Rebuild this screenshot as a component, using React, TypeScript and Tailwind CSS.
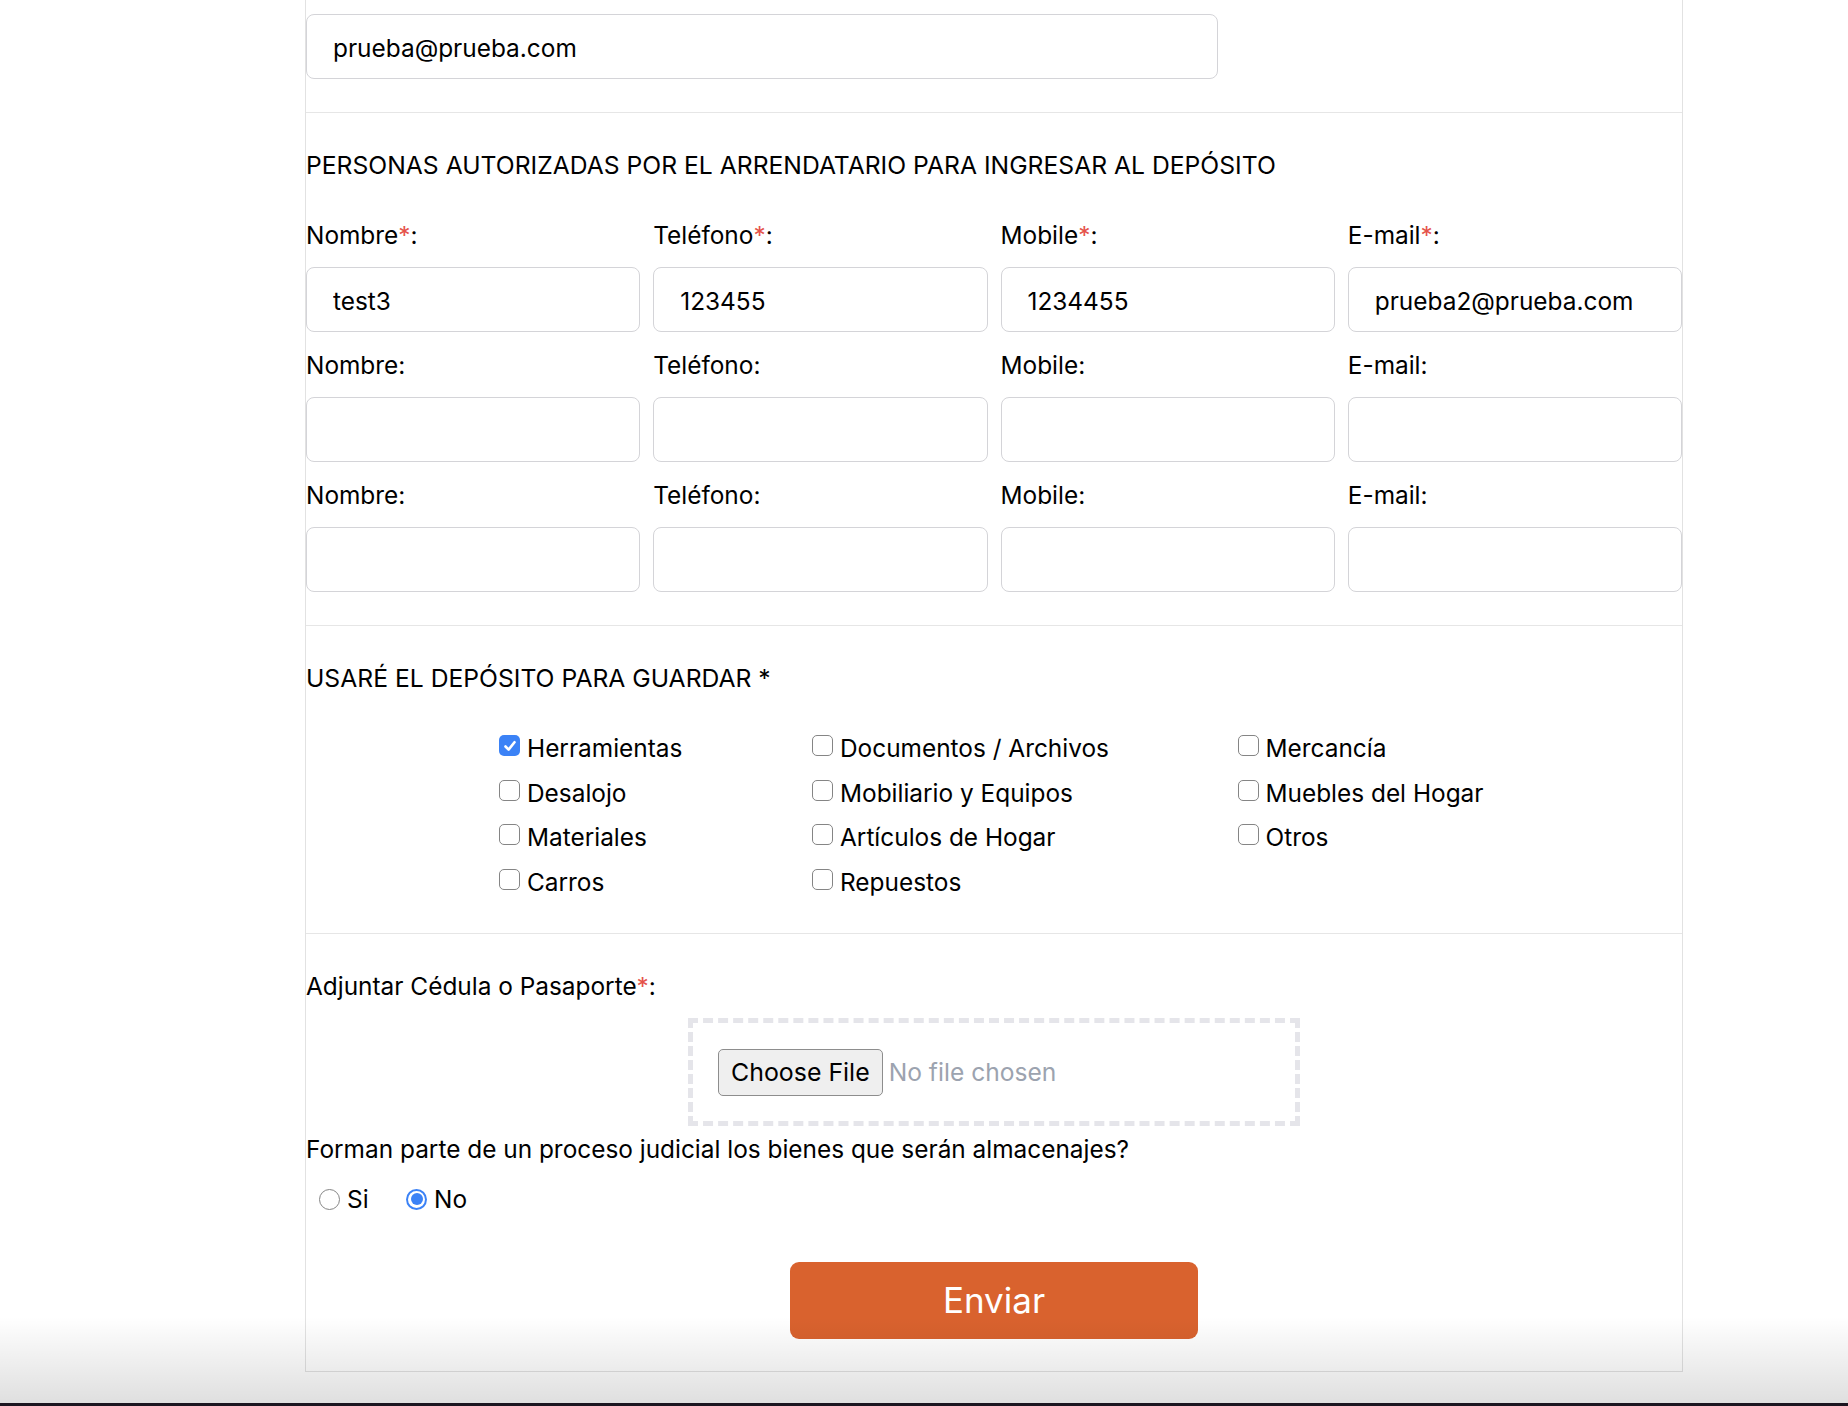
import React from "react";

const Req = () => <span className="text-[#e5534b]">*</span>;

function Label({ text, req }: { text: string; req?: boolean }) {
  return (
    <div className="h-[36px] leading-[36px] text-[24.4px] text-black whitespace-nowrap">
      {text}
      {req && <Req />}:
    </div>
  );
}

function Field({ value, className }: { value?: string; className?: string }) {
  return (
    <input
      readOnly
      value={value ?? ""}
      className={
        "block h-[65px] rounded-[8px] border border-[#d4d4d8] bg-white pl-[26px] pt-[2px] text-[24.4px] text-black outline-none " +
        (className ?? "w-full")
      }
    />
  );
}

function Check({ label, checked }: { label: string; checked?: boolean }) {
  return (
    <div className="flex h-[36px] items-start gap-[7px]">
      {checked ? (
        <span className="mt-[5px] flex h-[21px] w-[21px] shrink-0 items-center justify-center rounded-[5px] bg-[#3b82f6]">
          <svg width="14" height="14" viewBox="0 0 14 14" fill="none">
            <path d="M2.5 7.5 L5.6 10.6 L11.5 3.2" stroke="white" strokeWidth="2.6" strokeLinecap="round" strokeLinejoin="round" />
          </svg>
        </span>
      ) : (
        <span className="mt-[5px] block h-[21px] w-[21px] shrink-0 rounded-[5px] border-[1.5px] border-[#858585] bg-white" />
      )}
      <span className="leading-[36px] text-[24.4px] text-black whitespace-nowrap">{label}</span>
    </div>
  );
}

const rows = [
  { n: "test3", t: "123455", m: "1234455", e: "prueba2@prueba.com", req: true },
  { n: "", t: "", m: "", e: "", req: false },
  { n: "", t: "", m: "", e: "", req: false },
];

export default function App() {
  return (
    <div className="relative h-[1406px] w-full overflow-hidden bg-white font-['Inter',sans-serif] text-black">
      <div className="ml-[305px] w-[1378px] border-x border-b border-[#e2e2e2]">
        {/* section 1 */}
        <section className="pt-[14px] pb-[33px]">
          <Field value="prueba@prueba.com" className="w-[912px]" />
        </section>

        {/* section 2 */}
        <section className="border-t border-[#e6e6e6] pt-[34px] pb-[33px]">
          <h2 className="h-[36px] leading-[36px] text-[24.7px] font-normal whitespace-nowrap">
            PERSONAS AUTORIZADAS POR EL ARRENDATARIO PARA INGRESAR AL DEPÓSITO
          </h2>
          <div className="mt-[34px] grid grid-cols-4 gap-x-[13px] gap-y-[15px]">
            {rows.map((r, i) => (
              <React.Fragment key={i}>
                <div>
                  <Label text="Nombre" req={r.req} />
                  <div className="mt-[14px]"><Field value={r.n} /></div>
                </div>
                <div>
                  <Label text="Teléfono" req={r.req} />
                  <div className="mt-[14px]"><Field value={r.t} /></div>
                </div>
                <div>
                  <Label text="Mobile" req={r.req} />
                  <div className="mt-[14px]"><Field value={r.m} /></div>
                </div>
                <div>
                  <Label text="E-mail" req={r.req} />
                  <div className="mt-[14px]"><Field value={r.e} /></div>
                </div>
              </React.Fragment>
            ))}
          </div>
        </section>

        {/* section 3 */}
        <section className="border-t border-[#e6e6e6] pt-[34px] pb-[33px]">
          <h2 className="h-[36px] leading-[36px] text-[24.7px] font-normal whitespace-nowrap">
            USARÉ EL DEPÓSITO PARA GUARDAR *
          </h2>
          <div className="mt-[34px] ml-[193px] flex">
            <div className="flex w-[313px] flex-col gap-[8.7px]">
              <Check label="Herramientas" checked />
              <Check label="Desalojo" />
              <Check label="Materiales" />
              <Check label="Carros" />
            </div>
            <div className="flex w-[425.5px] flex-col gap-[8.7px]">
              <Check label="Documentos / Archivos" />
              <Check label="Mobiliario y Equipos" />
              <Check label="Artículos de Hogar" />
              <Check label="Repuestos" />
            </div>
            <div className="flex flex-col gap-[8.7px]">
              <Check label="Mercancía" />
              <Check label="Muebles del Hogar" />
              <Check label="Otros" />
            </div>
          </div>
        </section>

        {/* section 4 */}
        <section className="border-t border-[#e6e6e6] pt-[34px] pb-[32px]">
          <div className="h-[36px] leading-[36px] text-[24.4px] whitespace-nowrap">
            Adjuntar Cédula o Pasaporte<Req />:
          </div>
          <div className="mx-auto mt-[14px] flex h-[108px] w-[612px] items-center border-[5px] border-dashed border-[#e5e5ea] pl-[25px]">
            <button className="h-[47px] rounded-[5px] border-[1.5px] border-[#8d8d8d] bg-[#efefef] px-[12px] text-[24.9px] leading-none text-black">
              Choose File
            </button>
            <span className="ml-[6px] text-[24.6px] text-[#9ca3af]">No file chosen</span>
          </div>
          <div className="mt-[5px] h-[36px] leading-[36px] text-[24.4px] whitespace-nowrap">
            Forman parte de un proceso judicial los bienes que serán almacenajes?
          </div>
          <div className="mt-[14px] ml-[13px] flex h-[36px] items-center">
            <div className="flex w-[87px] items-center gap-[7px]">
              <span className="block h-[21px] w-[21px] rounded-full border-[1.5px] border-[#858585] bg-white" />
              <span className="leading-[36px] text-[24.4px]">Si</span>
            </div>
            <div className="flex items-center gap-[7px]">
              <span className="flex h-[21px] w-[21px] items-center justify-center rounded-full bg-[#3b82f6]">
                <span className="flex h-[17px] w-[17px] items-center justify-center rounded-full bg-white">
                  <span className="block h-[12px] w-[12px] rounded-full bg-[#3b82f6]" />
                </span>
              </span>
              <span className="leading-[36px] text-[24.4px]">No</span>
            </div>
          </div>
          <button className="mx-auto mt-[45px] flex h-[77px] w-[408px] items-center justify-center rounded-[9px] bg-[#d9622e] text-[35px] text-white">
            Enviar
          </button>
        </section>
      </div>

      {/* bottom window shading */}
      <div className="pointer-events-none absolute bottom-0 left-0 right-0 h-[89px] bg-gradient-to-b from-transparent to-black/[0.13]" />
      <div className="pointer-events-none absolute bottom-0 left-0 right-0 h-[3px] bg-[#1b1520]" />
    </div>
  );
}
